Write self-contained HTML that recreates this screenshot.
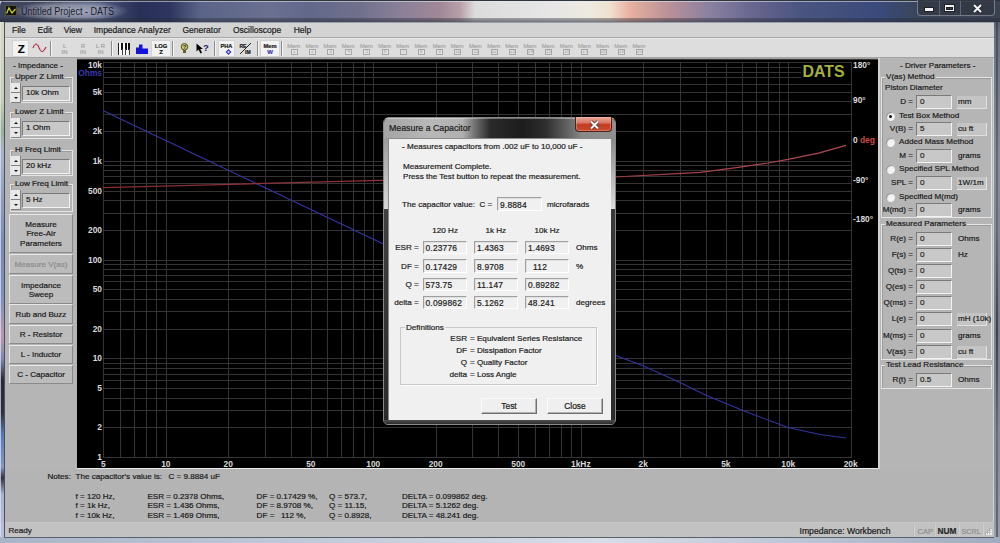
<!DOCTYPE html>
<html><head><meta charset="utf-8"><style>
*{box-sizing:border-box}
html,body{margin:0;padding:0}
body{width:1000px;height:543px;overflow:hidden;position:relative;background:#b4b4b4;font-family:'Liberation Sans', sans-serif;font-size:8.1px;color:#1a1a1a}
.ab{position:absolute}
.t{position:absolute;white-space:pre;line-height:1;-webkit-text-stroke:0.2px currentColor}
.fld{position:absolute;background:#c8c8c8;border-top:1px solid #7a7a7a;border-left:1px solid #7a7a7a;border-bottom:1px solid #f2f2f2;border-right:1px solid #f2f2f2}
.grp{position:absolute;border:1px solid #e4e4e4;box-shadow:inset 1px 1px 0 #9a9a9a}
.btn{position:absolute;background:#bcbcbc;border-top:1px solid #e8e8e8;border-left:1px solid #e8e8e8;border-bottom:1px solid #8a8a8a;border-right:1px solid #8a8a8a;text-align:center;line-height:1.15}
</style></head><body>

<div class="ab" style="left:0;top:0;width:1000px;height:543px;background:linear-gradient(180deg,#b8bcc8 0%,#d8d8c0 4%,#c8d0b8 18%,#98b098 24%,#a8b4c8 28%,#7a8ab0 45%,#8090b8 55%,#b89aa8 62%,#8088b0 66%,#282830 70%,#303040 76%,#5a78b0 80%,#8898c0 86%,#303040 88%,#a8b0d0 91%,#c0c4dc 100%)"></div>
<div class="ab" style="left:0;top:20px;width:1px;height:523px;background:rgba(225,228,240,0.7)"></div>
<div class="ab" style="left:4px;top:22px;width:1px;height:516px;background:#4a505c"></div>
<div class="ab" style="left:993px;top:0;width:7px;height:543px;background:linear-gradient(180deg,#3a4050 0%,#6a7080 6%,#8a8e9c 30%,#7a7e8c 60%,#8a8e9c 85%,#9a9eac 100%)"></div>
<div class="ab" style="left:993px;top:22px;width:1px;height:516px;background:#d0d2da"></div>
<div class="ab" style="left:996px;top:22px;width:2px;height:516px;background:linear-gradient(180deg,rgba(40,44,56,0.5),rgba(40,44,56,0.3) 40%,rgba(40,44,56,0.75) 60%,rgba(40,44,56,0.3) 80%,rgba(40,44,56,0.5))"></div>
<div class="ab" style="left:0;top:537px;width:1000px;height:6px;background:linear-gradient(90deg,#a8b4c8,#c8d0dc 40%,#d8dee8 60%,#a0acc0)"></div>
<div class="ab" style="left:4px;top:537px;width:990px;height:1px;background:#5a606c"></div>
<div class="ab" style="left:0;top:0;width:1000px;height:22px;border-radius:6px 6px 0 0;background:linear-gradient(90deg,#3c4258 0%,#464c66 6%,#5a6284 10%,#3a4268 12%,#283058 14%,#2e3660 17%,#5a6488 20%,#6a7090 27%,#62688a 31%,#70708c 36%,#8a8098 40%,#a08898 44%,#b8a0a8 46%,#dcdcdc 47.5%,#e6e6e6 55%,#eeeae0 59%,#f0e0d0 61%,#e8b0a0 63%,#b89098 67%,#8a80a0 71%,#6a6890 75%,#4a5480 80%,#3a4a7a 88%,#3a4458 92%,#3a4250 100%)"></div>
<div class="ab" style="left:0;top:0;width:1000px;height:1px;background:#30343c"></div>
<div class="ab" style="left:3px;top:1px;width:991px;height:1px;background:rgba(230,235,245,0.55)"></div>
<div class="ab" style="left:0;top:18px;width:1000px;height:4px;background:linear-gradient(180deg,rgba(40,44,56,0.35),rgba(40,44,56,0.6))"></div>
<div class="ab" style="left:12px;top:1px;width:116px;height:20px;border-radius:50%;background:radial-gradient(ellipse at center,rgba(235,238,245,0.55) 0%,rgba(235,238,245,0.35) 45%,rgba(235,238,245,0) 72%)"></div>
<div class="ab" style="left:5px;top:5px;width:12px;height:11px;background:#14140c;border:1px solid #505040"></div>
<svg class="ab" style="left:5px;top:5px" width="12" height="11"><polyline points="1.5,8.5 4,3 7,8 10.5,4" fill="none" stroke="#c8d040" stroke-width="1.3"/></svg>
<div class="t" style="left:21px;top:6.5px;font-size:10px;color:#1c2030;-webkit-text-stroke:0;transform:scaleX(0.906);transform-origin:0 0">Untitled Project - DATS</div>
<div class="ab" style="left:917px;top:0;width:78px;height:16px;border:1px solid rgba(200,205,220,0.45);border-top:none;border-radius:0 0 4px 4px;background:rgba(52,56,70,0.92)"></div>
<div class="ab" style="left:939px;top:1px;width:1px;height:14px;background:rgba(200,205,220,0.3)"></div>
<div class="ab" style="left:960px;top:1px;width:1px;height:14px;background:rgba(200,205,220,0.3)"></div>
<div class="ab" style="left:925px;top:7.5px;width:8px;height:3.5px;background:#f4f4f4;box-shadow:0 0 0 1px #202020"></div>
<div class="ab" style="left:945px;top:4.5px;width:8.5px;height:6.5px;border:1.5px solid #f4f4f4;border-top-width:2px;box-shadow:0 0 0 1px #202020, inset 0 0 0 1px #202020"></div>
<svg class="ab" style="left:972px;top:3px" width="11" height="10"><path d="M2,2 L9,9 M9,2 L2,9" stroke="#202020" stroke-width="3.2"/><path d="M2,2 L9,9 M9,2 L2,9" stroke="#f6f6f6" stroke-width="2"/></svg>
<div class="ab" style="left:5px;top:22px;width:989px;height:16px;background:#d3d3d3;border-top:1px solid #9aa0ac;border-bottom:1px solid #a8a8a8"></div>
<div class="t" style="left:12px;top:26px;font-size:8.5px;color:#202020">File</div>
<div class="t" style="left:37.5px;top:26px;font-size:8.5px;color:#202020">Edit</div>
<div class="t" style="left:63.7px;top:26px;font-size:8.5px;color:#202020">View</div>
<div class="t" style="left:93.7px;top:26px;font-size:8.5px;color:#202020">Impedance Analyzer</div>
<div class="t" style="left:182.5px;top:26px;font-size:8.5px;color:#202020">Generator</div>
<div class="t" style="left:233px;top:26px;font-size:8.5px;color:#202020">Oscilloscope</div>
<div class="t" style="left:293.7px;top:26px;font-size:8.5px;color:#202020">Help</div>
<div class="ab" style="left:5px;top:38px;width:989px;height:20px;background:#dddddd;border-top:1px solid #e8e8e8"></div>
<div class="ab" style="left:5px;top:57px;width:989px;height:1px;background:#a4a4a4"></div>
<div class="ab" style="left:5px;top:58px;width:72px;height:411px;background:#b5b5b5"></div>
<div class="ab" style="left:878px;top:58px;width:115px;height:411px;background:#b5b5b5;border-left:2px solid #d0d0d0"></div>
<div class="ab" style="left:5px;top:469px;width:988px;height:54px;background:#b4b4b4"></div>
<div class="ab" style="left:5px;top:522px;width:989px;height:15px;background:#c2c2c2;border-top:1px solid #c8c8c8"></div>
<div class="ab" style="left:77px;top:58px;width:801px;height:410px;background:#000;border-top:1px solid #a0a0a0;box-shadow:inset 0 1px 0 #3a3a3a"></div>
<div class="ab" style="left:77px;top:468px;width:801px;height:1px;background:#e8e8e8"></div>
<div class="ab" style="left:12px;top:40px;width:17px;height:17px;background:#f2f2f2;border:1px solid #d4d4d4"></div>
<div class="t" style="left:17.8px;top:44.2px;font-size:11.5px;font-weight:bold;color:#000">Z</div>
<svg class="ab" style="left:32px;top:43px" width="15" height="11"><path d="M1,5 C3,0 5,0 7,4.5 C9,10 11,10 14,4" fill="none" stroke="#f0b8c0" stroke-width="2.2"/><path d="M1,5 C3,0 5,0 7,4.5 C9,10 11,10 14,4" fill="none" stroke="#8a3040" stroke-width="1"/></svg>
<div class="ab" style="left:50px;top:41px;width:1px;height:15px;background:#8c8c8c;box-shadow:1px 0 0 #f4f4f4"></div>
<div class="t" style="left:61px;width:7px;text-align:center;top:43.5px;font-size:5.8px;color:#a4a4a4">L</div>
<div class="t" style="left:61px;width:7px;text-align:center;top:50px;font-size:5.8px;color:#a4a4a4">IN</div>
<div class="t" style="left:79.5px;width:7px;text-align:center;top:43.5px;font-size:5.8px;color:#a4a4a4">R</div>
<div class="t" style="left:79.5px;width:7px;text-align:center;top:50px;font-size:5.8px;color:#a4a4a4">IN</div>
<div class="t" style="left:95px;width:11px;text-align:center;top:43.5px;font-size:5.8px;color:#a4a4a4">L R</div>
<div class="t" style="left:95px;width:11px;text-align:center;top:50px;font-size:5.8px;color:#a4a4a4">IN</div>
<div class="ab" style="left:110.5px;top:41px;width:1px;height:15px;background:#8c8c8c;box-shadow:1px 0 0 #f4f4f4"></div>
<div class="ab" style="left:118px;top:43px;width:12px;height:11.5px;background:#fafafa"></div>
<div class="ab" style="left:118px;top:43px;width:1px;height:11.5px;background:#202020"></div>
<div class="ab" style="left:121.2px;top:43px;width:2px;height:7px;background:#101010"></div>
<div class="ab" style="left:121.7px;top:49px;width:1px;height:5.5px;background:#404040"></div>
<div class="ab" style="left:124.8px;top:43px;width:2px;height:7px;background:#101010"></div>
<div class="ab" style="left:125.3px;top:49px;width:1px;height:5.5px;background:#404040"></div>
<div class="ab" style="left:128.2px;top:43px;width:2px;height:7px;background:#101010"></div>
<div class="ab" style="left:128.7px;top:49px;width:1px;height:5.5px;background:#404040"></div>
<svg class="ab" style="left:136px;top:44px" width="13" height="11"><path d="M0,3.5 H3 V0.5 H6.5 V4.5 H12 V10 H0 Z" fill="#1414d8"/></svg>
<div class="ab" style="left:151px;top:40px;width:20px;height:17px;background:#f2f2f2;border:1px solid #d4d4d4"></div>
<div class="t" style="left:151px;width:20px;text-align:center;top:44.3px;font-size:5.8px;font-weight:bold;color:#101010">LOG</div>
<div class="t" style="left:151px;width:20px;text-align:center;top:49.3px;font-size:6px;font-weight:bold;color:#101010">Z</div>
<div class="ab" style="left:171.5px;top:41px;width:1px;height:15px;background:#8c8c8c;box-shadow:1px 0 0 #f4f4f4"></div>
<svg class="ab" style="left:180px;top:43px" width="9" height="11"><circle cx="4.5" cy="3.8" r="3.3" fill="#c8c870" stroke="#505020" stroke-width="1"/><rect x="3" y="7" width="3" height="3" fill="#606030"/><text x="4.5" y="6" font-size="6" text-anchor="middle" font-weight="bold" fill="#303010">?</text></svg>
<svg class="ab" style="left:196px;top:43px" width="13" height="11"><path d="M0.5,0.5 L0.5,8.5 L2.5,6.5 L4.5,10.5 L6,9.8 L4.2,6 L7,6 Z" fill="#000"/><text x="10" y="8" font-size="9.5" text-anchor="middle" font-weight="bold" fill="#1a1a70">?</text></svg>
<div class="ab" style="left:213.5px;top:41px;width:1px;height:15px;background:#8c8c8c;box-shadow:1px 0 0 #f4f4f4"></div>
<div class="ab" style="left:218px;top:40px;width:17px;height:17px;background:#f2f2f2;border:1px solid #d4d4d4"></div>
<div class="t" style="left:218px;width:17px;text-align:center;top:44px;font-size:5.6px;font-weight:bold;color:#202020">PHA</div>
<svg class="ab" style="left:225px;top:49px" width="7" height="6"><path d="M3.5,0 L6.5,3 L3.5,6 L0.5,3 Z" fill="#3a3ac0"/><circle cx="3.5" cy="3" r="1" fill="#e0e0ff"/></svg>
<div class="t" style="left:239.5px;top:43.5px;font-size:5px;font-weight:bold;color:#202020">RE</div>
<div class="t" style="left:245px;top:49.5px;font-size:5px;font-weight:bold;color:#202020">IM</div>
<svg class="ab" style="left:239px;top:42px" width="14" height="13"><path d="M12,1 L1,12" stroke="#202020" stroke-width="1"/></svg>
<div class="ab" style="left:256.5px;top:41px;width:1px;height:15px;background:#8c8c8c;box-shadow:1px 0 0 #f4f4f4"></div>
<div class="ab" style="left:260px;top:40px;width:20px;height:17px;background:#f2f2f2;border:1px solid #d4d4d4"></div>
<div class="t" style="left:260px;width:20px;text-align:center;top:44px;font-size:5.8px;font-weight:bold;color:#202020">Mem</div>
<div class="t" style="left:260px;width:20px;text-align:center;top:49px;font-size:6px;font-weight:bold;color:#3a3ab0">W</div>
<div class="ab" style="left:280.5px;top:41px;width:1px;height:15px;background:#8c8c8c;box-shadow:1px 0 0 #f4f4f4"></div>
<div class="t" style="left:286.2px;width:15px;text-align:center;top:43.5px;font-size:5.8px;color:#a8a8a8">Mem</div>
<div class="ab" style="left:290.7px;top:48.5px;width:7px;height:6.5px;border:1px solid #a8a8a8;background:#e4e4e4"></div>
<div class="t" style="left:290.7px;width:7px;text-align:center;top:49.6px;font-size:4.6px;color:#a0a0a0;-webkit-text-stroke:0">1</div>
<div class="t" style="left:304.4px;width:15px;text-align:center;top:43.5px;font-size:5.8px;color:#a8a8a8">Mem</div>
<div class="ab" style="left:308.9px;top:48.5px;width:7px;height:6.5px;border:1px solid #a8a8a8;background:#e4e4e4"></div>
<div class="t" style="left:308.9px;width:7px;text-align:center;top:49.6px;font-size:4.6px;color:#a0a0a0;-webkit-text-stroke:0">2</div>
<div class="t" style="left:322.5px;width:15px;text-align:center;top:43.5px;font-size:5.8px;color:#a8a8a8">Mem</div>
<div class="ab" style="left:327.0px;top:48.5px;width:7px;height:6.5px;border:1px solid #a8a8a8;background:#e4e4e4"></div>
<div class="t" style="left:327.0px;width:7px;text-align:center;top:49.6px;font-size:4.6px;color:#a0a0a0;-webkit-text-stroke:0">3</div>
<div class="t" style="left:340.7px;width:15px;text-align:center;top:43.5px;font-size:5.8px;color:#a8a8a8">Mem</div>
<div class="ab" style="left:345.2px;top:48.5px;width:7px;height:6.5px;border:1px solid #a8a8a8;background:#e4e4e4"></div>
<div class="t" style="left:345.2px;width:7px;text-align:center;top:49.6px;font-size:4.6px;color:#a0a0a0;-webkit-text-stroke:0">4</div>
<div class="t" style="left:358.9px;width:15px;text-align:center;top:43.5px;font-size:5.8px;color:#a8a8a8">Mem</div>
<div class="ab" style="left:363.4px;top:48.5px;width:7px;height:6.5px;border:1px solid #a8a8a8;background:#e4e4e4"></div>
<div class="t" style="left:363.4px;width:7px;text-align:center;top:49.6px;font-size:4.6px;color:#a0a0a0;-webkit-text-stroke:0">5</div>
<div class="t" style="left:377.1px;width:15px;text-align:center;top:43.5px;font-size:5.8px;color:#a8a8a8">Mem</div>
<div class="ab" style="left:381.6px;top:48.5px;width:7px;height:6.5px;border:1px solid #a8a8a8;background:#e4e4e4"></div>
<div class="t" style="left:381.6px;width:7px;text-align:center;top:49.6px;font-size:4.6px;color:#a0a0a0;-webkit-text-stroke:0">6</div>
<div class="t" style="left:395.2px;width:15px;text-align:center;top:43.5px;font-size:5.8px;color:#a8a8a8">Mem</div>
<div class="ab" style="left:399.7px;top:48.5px;width:7px;height:6.5px;border:1px solid #a8a8a8;background:#e4e4e4"></div>
<div class="t" style="left:399.7px;width:7px;text-align:center;top:49.6px;font-size:4.6px;color:#a0a0a0;-webkit-text-stroke:0">7</div>
<div class="t" style="left:413.4px;width:15px;text-align:center;top:43.5px;font-size:5.8px;color:#a8a8a8">Mem</div>
<div class="ab" style="left:417.9px;top:48.5px;width:7px;height:6.5px;border:1px solid #a8a8a8;background:#e4e4e4"></div>
<div class="t" style="left:417.9px;width:7px;text-align:center;top:49.6px;font-size:4.6px;color:#a0a0a0;-webkit-text-stroke:0">8</div>
<div class="t" style="left:431.6px;width:15px;text-align:center;top:43.5px;font-size:5.8px;color:#a8a8a8">Mem</div>
<div class="ab" style="left:436.1px;top:48.5px;width:7px;height:6.5px;border:1px solid #a8a8a8;background:#e4e4e4"></div>
<div class="t" style="left:436.1px;width:7px;text-align:center;top:49.6px;font-size:4.6px;color:#a0a0a0;-webkit-text-stroke:0">9</div>
<div class="t" style="left:449.7px;width:15px;text-align:center;top:43.5px;font-size:5.8px;color:#a8a8a8">Mem</div>
<div class="ab" style="left:454.2px;top:48.5px;width:7px;height:6.5px;border:1px solid #a8a8a8;background:#e4e4e4"></div>
<div class="t" style="left:454.2px;width:7px;text-align:center;top:49.6px;font-size:4.6px;color:#a0a0a0;-webkit-text-stroke:0">10</div>
<div class="t" style="left:467.9px;width:15px;text-align:center;top:43.5px;font-size:5.8px;color:#a8a8a8">Mem</div>
<div class="ab" style="left:472.4px;top:48.5px;width:7px;height:6.5px;border:1px solid #a8a8a8;background:#e4e4e4"></div>
<div class="t" style="left:472.4px;width:7px;text-align:center;top:49.6px;font-size:4.6px;color:#a0a0a0;-webkit-text-stroke:0">11</div>
<div class="t" style="left:486.1px;width:15px;text-align:center;top:43.5px;font-size:5.8px;color:#a8a8a8">Mem</div>
<div class="ab" style="left:490.6px;top:48.5px;width:7px;height:6.5px;border:1px solid #a8a8a8;background:#e4e4e4"></div>
<div class="t" style="left:490.6px;width:7px;text-align:center;top:49.6px;font-size:4.6px;color:#a0a0a0;-webkit-text-stroke:0">12</div>
<div class="t" style="left:504.2px;width:15px;text-align:center;top:43.5px;font-size:5.8px;color:#a8a8a8">Mem</div>
<div class="ab" style="left:508.7px;top:48.5px;width:7px;height:6.5px;border:1px solid #a8a8a8;background:#e4e4e4"></div>
<div class="t" style="left:508.7px;width:7px;text-align:center;top:49.6px;font-size:4.6px;color:#a0a0a0;-webkit-text-stroke:0">13</div>
<div class="t" style="left:522.4px;width:15px;text-align:center;top:43.5px;font-size:5.8px;color:#a8a8a8">Mem</div>
<div class="ab" style="left:526.9px;top:48.5px;width:7px;height:6.5px;border:1px solid #a8a8a8;background:#e4e4e4"></div>
<div class="t" style="left:526.9px;width:7px;text-align:center;top:49.6px;font-size:4.6px;color:#a0a0a0;-webkit-text-stroke:0">14</div>
<div class="t" style="left:540.6px;width:15px;text-align:center;top:43.5px;font-size:5.8px;color:#a8a8a8">Mem</div>
<div class="ab" style="left:545.1px;top:48.5px;width:7px;height:6.5px;border:1px solid #a8a8a8;background:#e4e4e4"></div>
<div class="t" style="left:545.1px;width:7px;text-align:center;top:49.6px;font-size:4.6px;color:#a0a0a0;-webkit-text-stroke:0">15</div>
<div class="t" style="left:558.8px;width:15px;text-align:center;top:43.5px;font-size:5.8px;color:#a8a8a8">Mem</div>
<div class="ab" style="left:563.2px;top:48.5px;width:7px;height:6.5px;border:1px solid #a8a8a8;background:#e4e4e4"></div>
<div class="t" style="left:563.2px;width:7px;text-align:center;top:49.6px;font-size:4.6px;color:#a0a0a0;-webkit-text-stroke:0">16</div>
<div class="t" style="left:576.9px;width:15px;text-align:center;top:43.5px;font-size:5.8px;color:#a8a8a8">Mem</div>
<div class="ab" style="left:581.4px;top:48.5px;width:7px;height:6.5px;border:1px solid #a8a8a8;background:#e4e4e4"></div>
<div class="t" style="left:581.4px;width:7px;text-align:center;top:49.6px;font-size:4.6px;color:#a0a0a0;-webkit-text-stroke:0">17</div>
<div class="t" style="left:595.1px;width:15px;text-align:center;top:43.5px;font-size:5.8px;color:#a8a8a8">Mem</div>
<div class="ab" style="left:599.6px;top:48.5px;width:7px;height:6.5px;border:1px solid #a8a8a8;background:#e4e4e4"></div>
<div class="t" style="left:599.6px;width:7px;text-align:center;top:49.6px;font-size:4.6px;color:#a0a0a0;-webkit-text-stroke:0">18</div>
<div class="t" style="left:613.3px;width:15px;text-align:center;top:43.5px;font-size:5.8px;color:#a8a8a8">Mem</div>
<div class="ab" style="left:617.8px;top:48.5px;width:7px;height:6.5px;border:1px solid #a8a8a8;background:#e4e4e4"></div>
<div class="t" style="left:617.8px;width:7px;text-align:center;top:49.6px;font-size:4.6px;color:#a0a0a0;-webkit-text-stroke:0">19</div>
<div class="t" style="left:631.4px;width:15px;text-align:center;top:43.5px;font-size:5.8px;color:#a8a8a8">Mem</div>
<div class="ab" style="left:635.9px;top:48.5px;width:7px;height:6.5px;border:1px solid #a8a8a8;background:#e4e4e4"></div>
<div class="t" style="left:635.9px;width:7px;text-align:center;top:49.6px;font-size:4.6px;color:#a0a0a0;-webkit-text-stroke:0">20</div>
<svg class="ab" style="left:0;top:0" width="1000" height="543">
<line x1="103.5" y1="62" x2="103.5" y2="457" stroke="#343434" stroke-width="1"/>
<line x1="120.5" y1="62" x2="120.5" y2="457" stroke="#343434" stroke-width="1"/>
<line x1="134.5" y1="62" x2="134.5" y2="457" stroke="#343434" stroke-width="1"/>
<line x1="146.5" y1="62" x2="146.5" y2="457" stroke="#343434" stroke-width="1"/>
<line x1="156.5" y1="62" x2="156.5" y2="457" stroke="#343434" stroke-width="1"/>
<line x1="166.5" y1="62" x2="166.5" y2="457" stroke="#343434" stroke-width="1"/>
<line x1="228.5" y1="62" x2="228.5" y2="457" stroke="#343434" stroke-width="1"/>
<line x1="265.5" y1="62" x2="265.5" y2="457" stroke="#343434" stroke-width="1"/>
<line x1="291.5" y1="62" x2="291.5" y2="457" stroke="#343434" stroke-width="1"/>
<line x1="311.5" y1="62" x2="311.5" y2="457" stroke="#343434" stroke-width="1"/>
<line x1="327.5" y1="62" x2="327.5" y2="457" stroke="#343434" stroke-width="1"/>
<line x1="341.5" y1="62" x2="341.5" y2="457" stroke="#343434" stroke-width="1"/>
<line x1="353.5" y1="62" x2="353.5" y2="457" stroke="#343434" stroke-width="1"/>
<line x1="364.5" y1="62" x2="364.5" y2="457" stroke="#343434" stroke-width="1"/>
<line x1="373.5" y1="62" x2="373.5" y2="457" stroke="#343434" stroke-width="1"/>
<line x1="436.5" y1="62" x2="436.5" y2="457" stroke="#343434" stroke-width="1"/>
<line x1="472.5" y1="62" x2="472.5" y2="457" stroke="#343434" stroke-width="1"/>
<line x1="498.5" y1="62" x2="498.5" y2="457" stroke="#343434" stroke-width="1"/>
<line x1="518.5" y1="62" x2="518.5" y2="457" stroke="#343434" stroke-width="1"/>
<line x1="535.5" y1="62" x2="535.5" y2="457" stroke="#343434" stroke-width="1"/>
<line x1="549.5" y1="62" x2="549.5" y2="457" stroke="#343434" stroke-width="1"/>
<line x1="561.5" y1="62" x2="561.5" y2="457" stroke="#343434" stroke-width="1"/>
<line x1="571.5" y1="62" x2="571.5" y2="457" stroke="#343434" stroke-width="1"/>
<line x1="581.5" y1="62" x2="581.5" y2="457" stroke="#343434" stroke-width="1"/>
<line x1="643.5" y1="62" x2="643.5" y2="457" stroke="#343434" stroke-width="1"/>
<line x1="680.5" y1="62" x2="680.5" y2="457" stroke="#343434" stroke-width="1"/>
<line x1="706.5" y1="62" x2="706.5" y2="457" stroke="#343434" stroke-width="1"/>
<line x1="726.5" y1="62" x2="726.5" y2="457" stroke="#343434" stroke-width="1"/>
<line x1="742.5" y1="62" x2="742.5" y2="457" stroke="#343434" stroke-width="1"/>
<line x1="756.5" y1="62" x2="756.5" y2="457" stroke="#343434" stroke-width="1"/>
<line x1="768.5" y1="62" x2="768.5" y2="457" stroke="#343434" stroke-width="1"/>
<line x1="779.5" y1="62" x2="779.5" y2="457" stroke="#343434" stroke-width="1"/>
<line x1="788.5" y1="62" x2="788.5" y2="457" stroke="#343434" stroke-width="1"/>
<line x1="851.5" y1="62" x2="851.5" y2="457" stroke="#343434" stroke-width="1"/>
<line x1="103" y1="457.5" x2="852" y2="457.5" stroke="#343434" stroke-width="1"/>
<line x1="103" y1="427.5" x2="852" y2="427.5" stroke="#343434" stroke-width="1"/>
<line x1="103" y1="410.5" x2="852" y2="410.5" stroke="#343434" stroke-width="1"/>
<line x1="103" y1="398.5" x2="852" y2="398.5" stroke="#343434" stroke-width="1"/>
<line x1="103" y1="388.5" x2="852" y2="388.5" stroke="#343434" stroke-width="1"/>
<line x1="103" y1="380.5" x2="852" y2="380.5" stroke="#343434" stroke-width="1"/>
<line x1="103" y1="374.5" x2="852" y2="374.5" stroke="#343434" stroke-width="1"/>
<line x1="103" y1="368.5" x2="852" y2="368.5" stroke="#343434" stroke-width="1"/>
<line x1="103" y1="363.5" x2="852" y2="363.5" stroke="#343434" stroke-width="1"/>
<line x1="103" y1="358.5" x2="852" y2="358.5" stroke="#343434" stroke-width="1"/>
<line x1="103" y1="329.5" x2="852" y2="329.5" stroke="#343434" stroke-width="1"/>
<line x1="103" y1="311.5" x2="852" y2="311.5" stroke="#343434" stroke-width="1"/>
<line x1="103" y1="299.5" x2="852" y2="299.5" stroke="#343434" stroke-width="1"/>
<line x1="103" y1="289.5" x2="852" y2="289.5" stroke="#343434" stroke-width="1"/>
<line x1="103" y1="281.5" x2="852" y2="281.5" stroke="#343434" stroke-width="1"/>
<line x1="103" y1="275.5" x2="852" y2="275.5" stroke="#343434" stroke-width="1"/>
<line x1="103" y1="269.5" x2="852" y2="269.5" stroke="#343434" stroke-width="1"/>
<line x1="103" y1="264.5" x2="852" y2="264.5" stroke="#343434" stroke-width="1"/>
<line x1="103" y1="260.5" x2="852" y2="260.5" stroke="#343434" stroke-width="1"/>
<line x1="103" y1="230.5" x2="852" y2="230.5" stroke="#343434" stroke-width="1"/>
<line x1="103" y1="213.5" x2="852" y2="213.5" stroke="#343434" stroke-width="1"/>
<line x1="103" y1="200.5" x2="852" y2="200.5" stroke="#343434" stroke-width="1"/>
<line x1="103" y1="191.5" x2="852" y2="191.5" stroke="#343434" stroke-width="1"/>
<line x1="103" y1="183.5" x2="852" y2="183.5" stroke="#343434" stroke-width="1"/>
<line x1="103" y1="176.5" x2="852" y2="176.5" stroke="#343434" stroke-width="1"/>
<line x1="103" y1="170.5" x2="852" y2="170.5" stroke="#343434" stroke-width="1"/>
<line x1="103" y1="165.5" x2="852" y2="165.5" stroke="#343434" stroke-width="1"/>
<line x1="103" y1="161.5" x2="852" y2="161.5" stroke="#343434" stroke-width="1"/>
<line x1="103" y1="131.5" x2="852" y2="131.5" stroke="#343434" stroke-width="1"/>
<line x1="103" y1="114.5" x2="852" y2="114.5" stroke="#343434" stroke-width="1"/>
<line x1="103" y1="101.5" x2="852" y2="101.5" stroke="#343434" stroke-width="1"/>
<line x1="103" y1="92.5" x2="852" y2="92.5" stroke="#343434" stroke-width="1"/>
<line x1="103" y1="84.5" x2="852" y2="84.5" stroke="#343434" stroke-width="1"/>
<line x1="103" y1="77.5" x2="852" y2="77.5" stroke="#343434" stroke-width="1"/>
<line x1="103" y1="72.5" x2="852" y2="72.5" stroke="#343434" stroke-width="1"/>
<line x1="103" y1="67.5" x2="852" y2="67.5" stroke="#343434" stroke-width="1"/>
<line x1="103" y1="62.5" x2="852" y2="62.5" stroke="#343434" stroke-width="1"/>
<polyline fill="none" stroke="#3434a4" stroke-width="1.1" points="103.3,110.8 107.0,112.6 110.8,114.3 114.5,116.1 118.2,117.9 122.0,119.7 125.7,121.5 129.5,123.2 133.2,125.0 136.9,126.8 140.7,128.6 144.4,130.3 148.1,132.1 151.9,133.9 155.6,135.7 159.4,137.5 163.1,139.2 166.8,141.0 170.6,142.8 174.3,144.6 178.0,146.3 181.8,148.1 185.5,149.9 189.3,151.7 193.0,153.5 196.7,155.2 200.5,157.0 204.2,158.8 207.9,160.6 211.7,162.3 215.4,164.1 219.2,165.9 222.9,167.7 226.6,169.4 230.4,171.2 234.1,173.0 237.8,174.8 241.6,176.6 245.3,178.3 249.0,180.1 252.8,181.9 256.5,183.7 260.3,185.4 264.0,187.2 267.7,189.0 271.5,190.8 275.2,192.6 278.9,194.3 282.7,196.1 286.4,197.9 290.2,199.7 293.9,201.4 297.6,203.2 301.4,205.0 305.1,206.8 308.8,208.6 312.6,210.3 316.3,212.1 320.1,213.9 323.8,215.7 327.5,217.4 331.3,219.2 335.0,221.0 338.7,222.8 342.5,224.6 346.2,226.3 350.0,228.1 353.7,229.9 357.4,231.7 361.2,233.4 364.9,235.2 368.6,237.0 372.4,238.8 376.1,240.6 379.8,242.3 383.6,244.1 387.3,245.9 391.1,247.7 394.8,249.4 398.5,251.2 402.3,253.0 406.0,254.8 409.7,256.6 413.5,258.3 417.2,260.1 421.0,261.9 424.7,263.7 428.4,265.4 432.2,267.2 435.9,269.0 439.6,270.8 443.4,272.5 447.1,274.3 450.9,276.1 454.6,277.9 458.3,279.7 462.1,281.4 465.8,283.2 469.5,285.0 473.3,286.8 477.0,288.5 480.8,290.3 484.5,292.1 488.2,293.9 492.0,295.7 495.7,297.4 499.4,299.2 503.2,301.0 506.9,302.8 510.6,304.5 514.4,306.3 518.1,308.1 521.9,309.9 525.6,311.6 529.3,313.4 533.1,315.2 536.8,316.9 540.5,318.7 544.3,320.5 548.0,322.3 551.8,324.0 555.5,325.8 559.2,327.6 563.0,329.3 566.7,331.1 570.4,332.9 574.2,334.6 577.9,336.4 581.7,338.1 585.4,339.9 589.1,341.7 592.9,343.4 596.6,345.2 600.3,346.9 604.1,348.7 607.8,350.5 611.6,352.2 615.0,355.2 643.0,365.8 680.0,382.6 706.0,395.2 743.0,410.6 788.0,427.5 820.0,434.5 846.0,438.0"/>
<defs><linearGradient id="rg" gradientUnits="userSpaceOnUse" x1="103" y1="0" x2="846" y2="0"><stop offset="0" stop-color="#8a2c34"/><stop offset="0.6" stop-color="#963840"/><stop offset="1" stop-color="#b24a54"/></linearGradient></defs>
<polyline fill="none" stroke="url(#rg)" stroke-width="1.2" points="103.0,187.7 250.0,183.8 390.0,180.2 500.0,179.0 615.0,177.0 677.0,173.6 700.0,172.3 740.0,167.2 768.0,163.0 788.0,159.4 818.5,153.2 846.0,145.4"/>
<text x="102" y="67.7" text-anchor="end" font-size="8.4" font-weight="bold" fill="#dadada">10k</text>
<text x="102" y="94.9" text-anchor="end" font-size="8.4" font-weight="bold" fill="#dadada">5k</text>
<text x="102" y="134.2" text-anchor="end" font-size="8.4" font-weight="bold" fill="#dadada">2k</text>
<text x="102" y="163.9" text-anchor="end" font-size="8.4" font-weight="bold" fill="#dadada">1k</text>
<text x="102" y="193.6" text-anchor="end" font-size="8.4" font-weight="bold" fill="#dadada">500</text>
<text x="102" y="232.9" text-anchor="end" font-size="8.4" font-weight="bold" fill="#dadada">200</text>
<text x="102" y="262.6" text-anchor="end" font-size="8.4" font-weight="bold" fill="#dadada">100</text>
<text x="102" y="292.3" text-anchor="end" font-size="8.4" font-weight="bold" fill="#dadada">50</text>
<text x="102" y="331.6" text-anchor="end" font-size="8.4" font-weight="bold" fill="#dadada">20</text>
<text x="102" y="361.3" text-anchor="end" font-size="8.4" font-weight="bold" fill="#dadada">10</text>
<text x="102" y="391.0" text-anchor="end" font-size="8.4" font-weight="bold" fill="#dadada">5</text>
<text x="102" y="430.3" text-anchor="end" font-size="8.4" font-weight="bold" fill="#dadada">2</text>
<text x="102" y="460.0" text-anchor="end" font-size="8.4" font-weight="bold" fill="#dadada">1</text>
<text x="102" y="75.5" text-anchor="end" font-size="8.4" font-weight="bold" fill="#3838b0">Ohms</text>
<text x="103.3" y="466.5" text-anchor="middle" font-size="8.4" font-weight="bold" fill="#dadada">5</text>
<text x="165.8" y="466.5" text-anchor="middle" font-size="8.4" font-weight="bold" fill="#dadada">10</text>
<text x="228.2" y="466.5" text-anchor="middle" font-size="8.4" font-weight="bold" fill="#dadada">20</text>
<text x="310.8" y="466.5" text-anchor="middle" font-size="8.4" font-weight="bold" fill="#dadada">50</text>
<text x="373.3" y="466.5" text-anchor="middle" font-size="8.4" font-weight="bold" fill="#dadada">100</text>
<text x="435.7" y="466.5" text-anchor="middle" font-size="8.4" font-weight="bold" fill="#dadada">200</text>
<text x="518.3" y="466.5" text-anchor="middle" font-size="8.4" font-weight="bold" fill="#dadada">500</text>
<text x="580.8" y="466.5" text-anchor="middle" font-size="8.4" font-weight="bold" fill="#dadada">1kHz</text>
<text x="643.2" y="466.5" text-anchor="middle" font-size="8.4" font-weight="bold" fill="#dadada">2k</text>
<text x="725.8" y="466.5" text-anchor="middle" font-size="8.4" font-weight="bold" fill="#dadada">5k</text>
<text x="788.3" y="466.5" text-anchor="middle" font-size="8.4" font-weight="bold" fill="#dadada">10k</text>
<text x="850.7" y="466.5" text-anchor="middle" font-size="8.4" font-weight="bold" fill="#dadada">20k</text>
<text x="853" y="68" font-size="8.4" font-weight="bold" fill="#dadada">180°</text>
<text x="853" y="103" font-size="8.4" font-weight="bold" fill="#dadada">90°</text>
<text x="853" y="183" font-size="8.4" font-weight="bold" fill="#dadada">-90°</text>
<text x="853" y="222" font-size="8.4" font-weight="bold" fill="#dadada">-180°</text>
<text x="853" y="143" font-size="8.4" font-weight="bold" fill="#dadada">0 <tspan fill="#d04848">deg</tspan></text>
<rect x="801" y="63.5" width="50" height="17" fill="#000"/>
<text x="802.5" y="77.3" font-size="15.9" font-weight="bold" fill="#a2b040">DATS</text>
</svg>
<div class="t" style="left:13px;top:62px">- Impedance -</div>
<div class="grp" style="left:10px;top:77px;width:63px;height:26px"></div>
<div class="t" style="left:14px;top:73px;background:#b5b5b5;padding:0 1px">Upper Z Limit</div>
<div class="ab" style="left:11px;top:83px;width:10px;height:20px;background:#b5b5b5"></div>
<div class="ab" style="left:11px;top:83px;width:10px;height:10px;background:#e8e8e8;border-right:1px solid #808080;border-bottom:1px solid #808080"></div>
<div class="ab" style="left:14px;top:87px;width:0;height:0;border-left:2px solid transparent;border-right:2px solid transparent;border-bottom:2px solid #101010"></div>
<div class="ab" style="left:11px;top:93px;width:10px;height:10px;background:#e8e8e8;border-right:1px solid #808080;border-bottom:1px solid #808080"></div>
<div class="ab" style="left:14px;top:97px;width:0;height:0;border-left:2px solid transparent;border-right:2px solid transparent;border-top:2px solid #101010"></div>
<div class="fld" style="left:22px;top:86px;width:48px;height:15px"></div>
<div class="t" style="left:26px;top:89px">10k Ohm</div>
<div class="grp" style="left:10px;top:112px;width:63px;height:27px"></div>
<div class="t" style="left:14px;top:108px;background:#b5b5b5;padding:0 1px">Lower Z Limit</div>
<div class="ab" style="left:11px;top:118px;width:10px;height:20px;background:#b5b5b5"></div>
<div class="ab" style="left:11px;top:118px;width:10px;height:10px;background:#e8e8e8;border-right:1px solid #808080;border-bottom:1px solid #808080"></div>
<div class="ab" style="left:14px;top:122px;width:0;height:0;border-left:2px solid transparent;border-right:2px solid transparent;border-bottom:2px solid #101010"></div>
<div class="ab" style="left:11px;top:128px;width:10px;height:10px;background:#e8e8e8;border-right:1px solid #808080;border-bottom:1px solid #808080"></div>
<div class="ab" style="left:14px;top:132px;width:0;height:0;border-left:2px solid transparent;border-right:2px solid transparent;border-top:2px solid #101010"></div>
<div class="fld" style="left:22px;top:121px;width:48px;height:15px"></div>
<div class="t" style="left:26px;top:124px">1 Ohm</div>
<div class="grp" style="left:10px;top:150px;width:63px;height:26px"></div>
<div class="t" style="left:14px;top:146px;background:#b5b5b5;padding:0 1px">Hi Freq Limit</div>
<div class="ab" style="left:11px;top:156px;width:10px;height:20px;background:#b5b5b5"></div>
<div class="ab" style="left:11px;top:156px;width:10px;height:10px;background:#e8e8e8;border-right:1px solid #808080;border-bottom:1px solid #808080"></div>
<div class="ab" style="left:14px;top:160px;width:0;height:0;border-left:2px solid transparent;border-right:2px solid transparent;border-bottom:2px solid #101010"></div>
<div class="ab" style="left:11px;top:166px;width:10px;height:10px;background:#e8e8e8;border-right:1px solid #808080;border-bottom:1px solid #808080"></div>
<div class="ab" style="left:14px;top:170px;width:0;height:0;border-left:2px solid transparent;border-right:2px solid transparent;border-top:2px solid #101010"></div>
<div class="fld" style="left:22px;top:159px;width:48px;height:15px"></div>
<div class="t" style="left:26px;top:162px">20 kHz</div>
<div class="grp" style="left:10px;top:184px;width:63px;height:28px"></div>
<div class="t" style="left:14px;top:180px;background:#b5b5b5;padding:0 1px">Low Freq Limit</div>
<div class="ab" style="left:11px;top:190px;width:10px;height:20px;background:#b5b5b5"></div>
<div class="ab" style="left:11px;top:190px;width:10px;height:10px;background:#e8e8e8;border-right:1px solid #808080;border-bottom:1px solid #808080"></div>
<div class="ab" style="left:14px;top:194px;width:0;height:0;border-left:2px solid transparent;border-right:2px solid transparent;border-bottom:2px solid #101010"></div>
<div class="ab" style="left:11px;top:200px;width:10px;height:10px;background:#e8e8e8;border-right:1px solid #808080;border-bottom:1px solid #808080"></div>
<div class="ab" style="left:14px;top:204px;width:0;height:0;border-left:2px solid transparent;border-right:2px solid transparent;border-top:2px solid #101010"></div>
<div class="fld" style="left:22px;top:193px;width:48px;height:15px"></div>
<div class="t" style="left:26px;top:196px">5 Hz</div>
<div class="btn" style="left:9px;top:214px;width:64px;height:39px"></div>
<div class="t" style="left:9px;top:220.1px;width:64px;text-align:center;line-height:9.3px;color:#1a1a1a">Measure<br>Free-Air<br>Parameters</div>
<div class="btn" style="left:9px;top:254px;width:64px;height:20px"></div>
<div class="t" style="left:9px;top:259.9px;width:64px;text-align:center;line-height:9.3px;color:#8c8c8c">Measure V(as)</div>
<div class="btn" style="left:9px;top:275px;width:64px;height:29px"></div>
<div class="t" style="left:9px;top:280.7px;width:64px;text-align:center;line-height:9.3px;color:#1a1a1a">Impedance<br>Sweep</div>
<div class="btn" style="left:9px;top:304px;width:64px;height:20px"></div>
<div class="t" style="left:9px;top:309.9px;width:64px;text-align:center;line-height:9.3px;color:#1a1a1a">Rub and Buzz</div>
<div class="btn" style="left:9px;top:325px;width:64px;height:19px"></div>
<div class="t" style="left:9px;top:330.4px;width:64px;text-align:center;line-height:9.3px;color:#1a1a1a">R - Resistor</div>
<div class="btn" style="left:9px;top:345px;width:64px;height:19px"></div>
<div class="t" style="left:9px;top:350.4px;width:64px;text-align:center;line-height:9.3px;color:#1a1a1a">L - Inductor</div>
<div class="btn" style="left:9px;top:365px;width:64px;height:19px"></div>
<div class="t" style="left:9px;top:370.4px;width:64px;text-align:center;line-height:9.3px;color:#1a1a1a">C - Capacitor</div>
<div class="t" style="left:900px;top:62px">- Driver Parameters -</div>
<div class="grp" style="left:881px;top:77px;width:111px;height:141px"></div>
<div class="t" style="left:885px;top:73px;background:#b5b5b5;padding:0 1px">V(as) Method</div>
<div class="t" style="left:885px;top:84px">Piston Diameter</div>
<div class="t" style="left:853px;width:60px;text-align:right;top:98px">D =</div>
<div class="fld" style="left:916px;top:95px;width:36px;height:14px"></div>
<div class="t" style="left:920px;top:98px">0</div>
<div class="ab" style="left:957px;top:96px;width:30px;height:13px;background:#c4c4c4;border-bottom:1px solid #e0e0e0;border-right:1px solid #e0e0e0"></div>
<div class="t" style="left:958px;top:98px">mm</div>
<div class="ab" style="left:886px;top:112px;width:9px;height:9px;border-radius:50%;background:#f4f4f4;box-shadow:inset 1px 1px 1px #909090"></div>
<div class="ab" style="left:889px;top:115px;width:3px;height:3px;border-radius:50%;background:#101010"></div>
<div class="t" style="left:899px;top:112px">Test Box Method</div>
<div class="t" style="left:853px;width:60px;text-align:right;top:125px">V(B) =</div>
<div class="fld" style="left:916px;top:122px;width:36px;height:14px"></div>
<div class="t" style="left:920px;top:125px">5</div>
<div class="ab" style="left:957px;top:123px;width:30px;height:13px;background:#c4c4c4;border-bottom:1px solid #e0e0e0;border-right:1px solid #e0e0e0"></div>
<div class="t" style="left:958px;top:125px">cu ft</div>
<div class="ab" style="left:886px;top:138px;width:9px;height:9px;border-radius:50%;background:#f4f4f4;box-shadow:inset 1px 1px 1px #909090"></div>
<div class="t" style="left:899px;top:138px">Added Mass Method</div>
<div class="t" style="left:853px;width:60px;text-align:right;top:152px">M =</div>
<div class="fld" style="left:916px;top:149px;width:36px;height:14px"></div>
<div class="t" style="left:920px;top:152px">0</div>
<div class="t" style="left:958px;top:152px">grams</div>
<div class="ab" style="left:886px;top:165px;width:9px;height:9px;border-radius:50%;background:#f4f4f4;box-shadow:inset 1px 1px 1px #909090"></div>
<div class="t" style="left:899px;top:165px">Specified SPL Method</div>
<div class="t" style="left:853px;width:60px;text-align:right;top:179px">SPL =</div>
<div class="fld" style="left:916px;top:176px;width:36px;height:14px"></div>
<div class="t" style="left:920px;top:179px">0</div>
<div class="ab" style="left:957px;top:177px;width:30px;height:13px;background:#c4c4c4;border-bottom:1px solid #e0e0e0;border-right:1px solid #e0e0e0"></div>
<div class="t" style="left:958px;top:179px">1W/1m</div>
<div class="ab" style="left:886px;top:193px;width:9px;height:9px;border-radius:50%;background:#f4f4f4;box-shadow:inset 1px 1px 1px #909090"></div>
<div class="t" style="left:899px;top:193px">Specified M(md)</div>
<div class="t" style="left:853px;width:60px;text-align:right;top:206px">M(md) =</div>
<div class="fld" style="left:916px;top:203px;width:36px;height:14px"></div>
<div class="t" style="left:920px;top:206px">0</div>
<div class="t" style="left:958px;top:206px">grams</div>
<div class="grp" style="left:881px;top:224px;width:111px;height:136px"></div>
<div class="t" style="left:885px;top:220px;background:#b5b5b5;padding:0 1px">Measured Parameters</div>
<div class="t" style="left:853px;width:60px;text-align:right;top:235px">R(e) =</div>
<div class="fld" style="left:916px;top:232px;width:36px;height:14px"></div>
<div class="t" style="left:920px;top:235px">0</div>
<div class="t" style="left:958px;top:235px">Ohms</div>
<div class="t" style="left:853px;width:60px;text-align:right;top:251px">F(s) =</div>
<div class="fld" style="left:916px;top:248px;width:36px;height:14px"></div>
<div class="t" style="left:920px;top:251px">0</div>
<div class="t" style="left:958px;top:251px">Hz</div>
<div class="t" style="left:853px;width:60px;text-align:right;top:267px">Q(ts) =</div>
<div class="fld" style="left:916px;top:264px;width:36px;height:14px"></div>
<div class="t" style="left:920px;top:267px">0</div>
<div class="t" style="left:853px;width:60px;text-align:right;top:283px">Q(es) =</div>
<div class="fld" style="left:916px;top:280px;width:36px;height:14px"></div>
<div class="t" style="left:920px;top:283px">0</div>
<div class="t" style="left:853px;width:60px;text-align:right;top:299px">Q(ms) =</div>
<div class="fld" style="left:916px;top:296px;width:36px;height:14px"></div>
<div class="t" style="left:920px;top:299px">0</div>
<div class="t" style="left:853px;width:60px;text-align:right;top:315px">L(e) =</div>
<div class="fld" style="left:916px;top:312px;width:36px;height:14px"></div>
<div class="t" style="left:920px;top:315px">0</div>
<div class="ab" style="left:957px;top:313px;width:30px;height:13px;background:#c4c4c4;border-bottom:1px solid #e0e0e0;border-right:1px solid #e0e0e0"></div>
<div class="t" style="left:958px;top:315px">mH (10k)</div>
<div class="t" style="left:853px;width:60px;text-align:right;top:332px">M(ms) =</div>
<div class="fld" style="left:916px;top:329px;width:36px;height:14px"></div>
<div class="t" style="left:920px;top:332px">0</div>
<div class="t" style="left:958px;top:332px">grams</div>
<div class="t" style="left:853px;width:60px;text-align:right;top:348px">V(as) =</div>
<div class="fld" style="left:916px;top:345px;width:36px;height:14px"></div>
<div class="t" style="left:920px;top:348px">0</div>
<div class="ab" style="left:957px;top:346px;width:30px;height:13px;background:#c4c4c4;border-bottom:1px solid #e0e0e0;border-right:1px solid #e0e0e0"></div>
<div class="t" style="left:958px;top:348px">cu ft</div>
<div class="grp" style="left:881px;top:365px;width:111px;height:24px"></div>
<div class="t" style="left:885px;top:361px;background:#b5b5b5;padding:0 1px">Test Lead Resistance</div>
<div class="t" style="left:853px;width:60px;text-align:right;top:376px">R(t) =</div>
<div class="fld" style="left:916px;top:373px;width:36px;height:14px"></div>
<div class="t" style="left:920px;top:376px">0.5</div>
<div class="t" style="left:958px;top:376px">Ohms</div>
<div class="t" style="left:47.5px;top:473px">Notes:</div>
<div class="t" style="left:75.5px;top:473px">The capacitor's value is:</div>
<div class="t" style="left:168.5px;top:473px">C = 9.8884 uF</div>
<div class="t" style="left:75.5px;top:492.5px">f = 120 Hz,</div>
<div class="t" style="left:147.4px;top:492.5px">ESR = 0.2378 Ohms,</div>
<div class="t" style="left:256.6px;top:492.5px">DF = 0.17429 %,</div>
<div class="t" style="left:329px;top:492.5px">Q = 573.7,</div>
<div class="t" style="left:402px;top:492.5px">DELTA = 0.099862 deg.</div>
<div class="t" style="left:75.5px;top:502.1px">f = 1k Hz,</div>
<div class="t" style="left:147.4px;top:502.1px">ESR = 1.436 Ohms,</div>
<div class="t" style="left:256.6px;top:502.1px">DF = 8.9708 %,</div>
<div class="t" style="left:329px;top:502.1px">Q = 11.15,</div>
<div class="t" style="left:402px;top:502.1px">DELTA = 5.1262 deg.</div>
<div class="t" style="left:75.5px;top:511.7px">f = 10k Hz,</div>
<div class="t" style="left:147.4px;top:511.7px">ESR = 1.469 Ohms,</div>
<div class="t" style="left:256.6px;top:511.7px">DF =   112 %,</div>
<div class="t" style="left:329px;top:511.7px">Q = 0.8928,</div>
<div class="t" style="left:402px;top:511.7px">DELTA = 48.241 deg.</div>
<div class="t" style="left:8.5px;top:527px">Ready</div>
<div class="t" style="left:799.5px;top:526.5px;font-size:8.65px">Impedance: Workbench</div>
<div class="ab" style="left:913px;top:524px;width:1px;height:12px;background:#bcbcbc;box-shadow:1px 0 0 #d0d0d0"></div>
<div class="ab" style="left:934px;top:524px;width:1px;height:12px;background:#bcbcbc;box-shadow:1px 0 0 #d0d0d0"></div>
<div class="ab" style="left:958px;top:524px;width:1px;height:12px;background:#bcbcbc;box-shadow:1px 0 0 #d0d0d0"></div>
<div class="ab" style="left:982px;top:524px;width:1px;height:12px;background:#bcbcbc;box-shadow:1px 0 0 #d0d0d0"></div>
<div class="t" style="left:917.5px;top:527.5px;font-size:7.5px;color:#8e8e8e">CAP</div>
<div class="t" style="left:937.5px;top:527px;font-size:8.3px;font-weight:bold;color:#282828">NUM</div>
<div class="t" style="left:961.5px;top:527.5px;font-size:7.2px;color:#8e8e8e">SCRL</div>
<div class="ab" style="left:990px;top:529px;width:1.5px;height:1.5px;background:#f0f0f0;box-shadow:-0.5px -0.5px 0 #909090"></div>
<div class="ab" style="left:988px;top:531px;width:1.5px;height:1.5px;background:#f0f0f0;box-shadow:-0.5px -0.5px 0 #909090"></div>
<div class="ab" style="left:990px;top:531px;width:1.5px;height:1.5px;background:#f0f0f0;box-shadow:-0.5px -0.5px 0 #909090"></div>
<div class="ab" style="left:986px;top:533px;width:1.5px;height:1.5px;background:#f0f0f0;box-shadow:-0.5px -0.5px 0 #909090"></div>
<div class="ab" style="left:988px;top:533px;width:1.5px;height:1.5px;background:#f0f0f0;box-shadow:-0.5px -0.5px 0 #909090"></div>
<div class="ab" style="left:990px;top:533px;width:1.5px;height:1.5px;background:#f0f0f0;box-shadow:-0.5px -0.5px 0 #909090"></div>
<div class="ab" style="left:383px;top:117px;width:233px;height:308px;border-radius:6px 6px 5px 5px;border:1px solid #8a8a8a;background:#2e2e2e"></div>
<div class="ab" style="left:384px;top:118px;width:231px;height:20px;border-radius:5px 5px 0 0;background:linear-gradient(90deg,#a4a4a4 0%,#b8b8b8 20%,#b0b0b0 34%,#6a6a6a 40%,#2a2a2a 46%,#1c1c1c 60%,#2e2e2e 70%,#5a5a5a 78%,#8a8a8a 86%,#909090 100%)"></div>
<div class="ab" style="left:385px;top:118px;width:229px;height:1px;background:rgba(255,255,255,0.35)"></div>
<div class="ab" style="left:384px;top:138px;width:4px;height:71px;background:linear-gradient(180deg,#9a9a9a,#d8d8d8)"></div>
<div class="ab" style="left:384px;top:209px;width:4px;height:211px;background:linear-gradient(180deg,#404040,#2a2a2a)"></div>
<div class="ab" style="left:611px;top:138px;width:4px;height:71px;background:linear-gradient(180deg,#8a8a8a,#dcdcdc)"></div>
<div class="ab" style="left:611px;top:209px;width:4px;height:211px;background:linear-gradient(180deg,#3a3a3a,#2a2a2a)"></div>
<div class="ab" style="left:384px;top:420px;width:231px;height:4px;border-radius:0 0 4px 4px;background:linear-gradient(180deg,#505050,#2a2a2a)"></div>
<div class="t" style="left:389px;top:122.8px;font-size:9.9px;color:#1a1a1a;transform:scaleX(0.89);transform-origin:0 0">Measure a Capacitor</div>
<div class="ab" style="left:575px;top:117px;width:37px;height:15px;border:1px solid #4a2018;border-top:none;border-radius:0 0 4px 4px;background:linear-gradient(180deg,#e8a898 0%,#d87868 40%,#c43a22 55%,#c84a2c 100%);box-shadow:inset 0 0 0 1px rgba(255,200,180,0.35)"></div>
<svg class="ab" style="left:589px;top:120px" width="11" height="10"><path d="M2,1.5 L9,8.5 M9,1.5 L2,8.5" stroke="#4a2a22" stroke-width="3.4"/><path d="M2,1.5 L9,8.5 M9,1.5 L2,8.5" stroke="#fafafa" stroke-width="2.1"/></svg>
<div class="ab" style="left:388px;top:138px;width:223px;height:282px;background:#f0f0f0;border-top:1px solid #8a8a8a;border-left:1px solid #8a8a8a"></div>
<div class="t" style="left:402px;top:143px;color:#202020">- Measures capacitors from .002 uF to 10,000 uF -</div>
<div class="t" style="left:403px;top:162.5px;color:#202020">Measurement Complete.</div>
<div class="t" style="left:403px;top:172.5px;color:#202020">Press the Test button to repeat the measurement.</div>
<div class="t" style="left:402px;top:201px;color:#202020">The capacitor value:  C =</div>
<div class="ab" style="left:497px;top:197px;width:45px;height:14px;background:#f0f0f0;border-top:1px solid #a0a0a0;border-left:1px solid #a0a0a0;border-bottom:1px solid #ffffff;border-right:1px solid #ffffff;box-shadow:inset 1px 1px 0 #e0e0e0"></div>
<div class="t" style="left:500px;top:200.5px;color:#202020;font-size:8.4px;letter-spacing:0.2px">9.8884</div>
<div class="t" style="left:547px;top:201px;color:#202020">microfarads</div>
<div class="t" style="left:415.2px;width:60px;text-align:center;top:227px;color:#202020">120 Hz</div>
<div class="t" style="left:465.8px;width:60px;text-align:center;top:227px;color:#202020">1k Hz</div>
<div class="t" style="left:517px;width:60px;text-align:center;top:227px;color:#202020">10k Hz</div>
<div class="t" style="left:378.8px;width:40px;text-align:right;top:244.0px;color:#202020">ESR =</div>
<div class="ab" style="left:422.5px;top:240.5px;width:44px;height:13.5px;background:#f0f0f0;border-top:1px solid #a0a0a0;border-left:1px solid #a0a0a0;border-bottom:1px solid #ffffff;border-right:1px solid #ffffff;box-shadow:inset 1px 1px 0 #e0e0e0"></div>
<div class="t" style="left:425.5px;top:244.0px;color:#202020;font-size:8.4px;letter-spacing:0.2px">0.23776</div>
<div class="ab" style="left:474px;top:240.5px;width:44px;height:13.5px;background:#f0f0f0;border-top:1px solid #a0a0a0;border-left:1px solid #a0a0a0;border-bottom:1px solid #ffffff;border-right:1px solid #ffffff;box-shadow:inset 1px 1px 0 #e0e0e0"></div>
<div class="t" style="left:477px;top:244.0px;color:#202020;font-size:8.4px;letter-spacing:0.2px">1.4363</div>
<div class="ab" style="left:525px;top:240.5px;width:44px;height:13.5px;background:#f0f0f0;border-top:1px solid #a0a0a0;border-left:1px solid #a0a0a0;border-bottom:1px solid #ffffff;border-right:1px solid #ffffff;box-shadow:inset 1px 1px 0 #e0e0e0"></div>
<div class="t" style="left:528px;top:244.0px;color:#202020;font-size:8.4px;letter-spacing:0.2px">1.4693</div>
<div class="t" style="left:576px;top:244.0px;color:#202020">Ohms</div>
<div class="t" style="left:378.8px;width:40px;text-align:right;top:262.5px;color:#202020">DF =</div>
<div class="ab" style="left:422.5px;top:259px;width:44px;height:13.5px;background:#f0f0f0;border-top:1px solid #a0a0a0;border-left:1px solid #a0a0a0;border-bottom:1px solid #ffffff;border-right:1px solid #ffffff;box-shadow:inset 1px 1px 0 #e0e0e0"></div>
<div class="t" style="left:425.5px;top:262.5px;color:#202020;font-size:8.4px;letter-spacing:0.2px">0.17429</div>
<div class="ab" style="left:474px;top:259px;width:44px;height:13.5px;background:#f0f0f0;border-top:1px solid #a0a0a0;border-left:1px solid #a0a0a0;border-bottom:1px solid #ffffff;border-right:1px solid #ffffff;box-shadow:inset 1px 1px 0 #e0e0e0"></div>
<div class="t" style="left:477px;top:262.5px;color:#202020;font-size:8.4px;letter-spacing:0.2px">8.9708</div>
<div class="ab" style="left:525px;top:259px;width:44px;height:13.5px;background:#f0f0f0;border-top:1px solid #a0a0a0;border-left:1px solid #a0a0a0;border-bottom:1px solid #ffffff;border-right:1px solid #ffffff;box-shadow:inset 1px 1px 0 #e0e0e0"></div>
<div class="t" style="left:528px;top:262.5px;color:#202020;font-size:8.4px;letter-spacing:0.2px">  112</div>
<div class="t" style="left:576px;top:262.5px;color:#202020">%</div>
<div class="t" style="left:378.8px;width:40px;text-align:right;top:281.0px;color:#202020">Q =</div>
<div class="ab" style="left:422.5px;top:277.5px;width:44px;height:13.5px;background:#f0f0f0;border-top:1px solid #a0a0a0;border-left:1px solid #a0a0a0;border-bottom:1px solid #ffffff;border-right:1px solid #ffffff;box-shadow:inset 1px 1px 0 #e0e0e0"></div>
<div class="t" style="left:425.5px;top:281.0px;color:#202020;font-size:8.4px;letter-spacing:0.2px">573.75</div>
<div class="ab" style="left:474px;top:277.5px;width:44px;height:13.5px;background:#f0f0f0;border-top:1px solid #a0a0a0;border-left:1px solid #a0a0a0;border-bottom:1px solid #ffffff;border-right:1px solid #ffffff;box-shadow:inset 1px 1px 0 #e0e0e0"></div>
<div class="t" style="left:477px;top:281.0px;color:#202020;font-size:8.4px;letter-spacing:0.2px">11.147</div>
<div class="ab" style="left:525px;top:277.5px;width:44px;height:13.5px;background:#f0f0f0;border-top:1px solid #a0a0a0;border-left:1px solid #a0a0a0;border-bottom:1px solid #ffffff;border-right:1px solid #ffffff;box-shadow:inset 1px 1px 0 #e0e0e0"></div>
<div class="t" style="left:528px;top:281.0px;color:#202020;font-size:8.4px;letter-spacing:0.2px">0.89282</div>
<div class="t" style="left:378.8px;width:40px;text-align:right;top:299.0px;color:#202020">delta =</div>
<div class="ab" style="left:422.5px;top:295.5px;width:44px;height:13.5px;background:#f0f0f0;border-top:1px solid #a0a0a0;border-left:1px solid #a0a0a0;border-bottom:1px solid #ffffff;border-right:1px solid #ffffff;box-shadow:inset 1px 1px 0 #e0e0e0"></div>
<div class="t" style="left:425.5px;top:299.0px;color:#202020;font-size:8.4px;letter-spacing:0.2px">0.099862</div>
<div class="ab" style="left:474px;top:295.5px;width:44px;height:13.5px;background:#f0f0f0;border-top:1px solid #a0a0a0;border-left:1px solid #a0a0a0;border-bottom:1px solid #ffffff;border-right:1px solid #ffffff;box-shadow:inset 1px 1px 0 #e0e0e0"></div>
<div class="t" style="left:477px;top:299.0px;color:#202020;font-size:8.4px;letter-spacing:0.2px">5.1262</div>
<div class="ab" style="left:525px;top:295.5px;width:44px;height:13.5px;background:#f0f0f0;border-top:1px solid #a0a0a0;border-left:1px solid #a0a0a0;border-bottom:1px solid #ffffff;border-right:1px solid #ffffff;box-shadow:inset 1px 1px 0 #e0e0e0"></div>
<div class="t" style="left:528px;top:299.0px;color:#202020;font-size:8.4px;letter-spacing:0.2px">48.241</div>
<div class="t" style="left:576px;top:299.0px;color:#202020">degrees</div>
<div class="ab" style="left:400px;top:327px;width:197px;height:58px;border:1px solid #c8c8c8;box-shadow:1px 1px 0 #ffffff"></div>
<div class="t" style="left:405px;top:324px;background:#f0f0f0;padding:0 1px;color:#202020">Definitions</div>
<div class="t" style="left:417px;width:50px;text-align:right;top:335.0px;color:#202020">ESR</div>
<div class="t" style="left:470px;top:335.0px;color:#202020">= Equivalent Series Resistance</div>
<div class="t" style="left:417px;width:50px;text-align:right;top:347.1px;color:#202020">DF</div>
<div class="t" style="left:470px;top:347.1px;color:#202020">= Dissipation Factor</div>
<div class="t" style="left:417px;width:50px;text-align:right;top:359.2px;color:#202020">Q</div>
<div class="t" style="left:470px;top:359.2px;color:#202020">= Quality Factor</div>
<div class="t" style="left:417px;width:50px;text-align:right;top:371.3px;color:#202020">delta</div>
<div class="t" style="left:470px;top:371.3px;color:#202020">= Loss Angle</div>
<div class="ab" style="left:481px;top:397.5px;width:56px;height:16px;background:#efefef;border-top:1px solid #fafafa;border-left:1px solid #fafafa;border-bottom:1px solid #707070;border-right:1px solid #707070;box-shadow:inset -1px -1px 0 #b0b0b0"></div>
<div class="t" style="left:481px;width:56px;text-align:center;top:401.5px;color:#202020;font-size:8.4px">Test</div>
<div class="ab" style="left:547px;top:397.5px;width:56px;height:16px;background:#efefef;border-top:1px solid #fafafa;border-left:1px solid #fafafa;border-bottom:1px solid #707070;border-right:1px solid #707070;box-shadow:inset -1px -1px 0 #b0b0b0"></div>
<div class="t" style="left:547px;width:56px;text-align:center;top:401.5px;color:#202020;font-size:8.4px">Close</div>
</body></html>
